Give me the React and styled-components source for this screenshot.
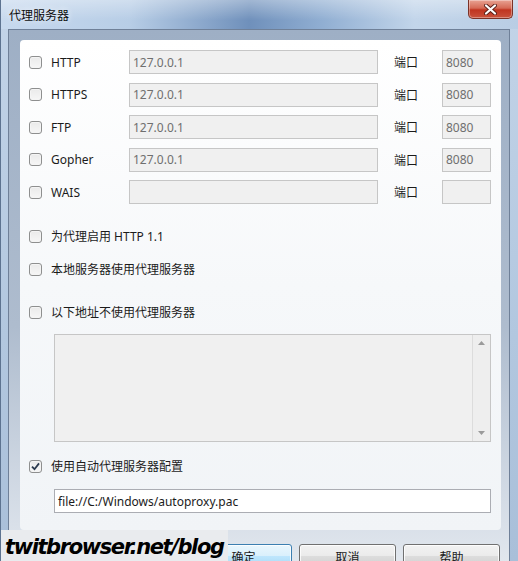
import React from "react";
import styled, { createGlobalStyle } from "styled-components";

const GlobalStyle = createGlobalStyle`
  html, body {
    margin: 0;
    padding: 0;
    overflow: hidden;
  }
  body {
    font-family: "Noto Sans", "Noto Sans CJK SC", sans-serif;
    font-size: 12px;
    color: #1b1b1b;
  }
`;

const Window = styled.div`
  position: relative;
  width: 518px;
  height: 561px;
  overflow: hidden;
  display: flex;
  flex-direction: column;
  background: linear-gradient(180deg, #c3d4e8 0%, #b2c7df 60%, #a9bfd9 100%);
  border-left: 1px solid #5d7390;
  box-sizing: border-box;
`;

const TitleBar = styled.div`
  height: 29px;
  flex: none;
  display: flex;
  align-items: flex-start;
  padding-left: 8px;
  background:
    linear-gradient(180deg, rgba(255, 255, 255, 0.35) 0%, rgba(255, 255, 255, 0) 70%),
    linear-gradient(90deg, #c7d9ee 0%, #b7cde6 25%, #6f90bb 48%, #90aed2 62%, #c2d5ea 80%, #b9cde4 100%);
`;

const Title = styled.span`
  margin-top: 6px;
  font-size: 12px;
  color: #0c0c0c;
  text-shadow: 0 0 6px rgba(255, 255, 255, 0.9);
`;

const CloseButton = styled.div`
  margin-left: auto;
  margin-right: 5px;
  width: 45px;
  height: 19px;
  display: flex;
  align-items: center;
  justify-content: center;
  box-sizing: border-box;
  border: 1px solid #7b3227;
  border-top: none;
  border-radius: 0 0 5px 5px;
  background: linear-gradient(180deg, #e9a393 0%, #d56a55 45%, #c0341f 55%, #c9523c 100%);
  box-shadow: inset 0 0 0 1px rgba(255, 255, 255, 0.35);
`;

const Client = styled.div`
  flex: 1;
  margin: 0 8px 0 7px;
  border: 1px solid #6f8098;
  border-bottom: none;
  padding: 10px 8px 0 11px;
  display: flex;
  flex-direction: column;
  background: linear-gradient(180deg, #9eafc5 0%, #aebcce 55%, #d9e0e9 92%, #e3e8ee 100%);
`;

const Panel = styled.div`
  height: 490px;
  flex: none;
  box-sizing: border-box;
  border-radius: 4px;
  background: linear-gradient(180deg, #ffffff 0%, #f6f8fa 50%, #f1f4f7 100%);
  padding: 10px 10px 0 9px;
  display: flex;
  flex-direction: column;
`;

const ProxyList = styled.div`
  display: flex;
  flex-direction: column;
  gap: 8.5px;
`;

const ProxyRow = styled.div`
  display: flex;
  align-items: center;
  height: 24px;
`;

const Box = styled.span`
  width: 13px;
  height: 13px;
  flex: none;
  box-sizing: border-box;
  border: 1px solid #8e8f8f;
  border-radius: 3px;
  background: linear-gradient(180deg, #eaeaea 0%, #f6f6f6 100%);
  box-shadow: inset 0 0 0 1px #f4f4f4;
  display: flex;
  align-items: center;
  justify-content: center;
`;

const ProtoLabel = styled.span`
  width: 87px;
  padding-left: 9px;
  box-sizing: border-box;
`;

const Field = styled.div`
  width: ${(p) => p.$w}px;
  height: 24px;
  flex: none;
  box-sizing: border-box;
  border: 1px solid ${(p) => (p.$active ? "#abadb3" : "#c6c6c6")};
  background: ${(p) => (p.$active ? "#ffffff" : "#f0f0f0")};
  color: ${(p) => (p.$active ? "#1b1b1b" : "#6f6f6f")};
  padding-left: 3px;
  display: flex;
  align-items: center;
  font-size: 12px;
  white-space: nowrap;
`;

const PortLabel = styled.span`
  width: 64px;
  padding-left: 16px;
  box-sizing: border-box;
`;

const OptionRow = styled.div`
  display: flex;
  align-items: center;
  height: 16px;
  margin-top: ${(p) => p.$top}px;
`;

const OptionText = styled.span`
  padding-left: 9px;
`;

const ListBox = styled.div`
  margin: 14px 0 0 25px;
  height: 108px;
  box-sizing: border-box;
  border: 1px solid #c6c6c6;
  background: #f0f0f0;
  display: flex;
  justify-content: flex-end;
`;

const ScrollTrack = styled.div`
  width: 17px;
  border-left: 1px solid #dcdcdc;
  background: #eeeeee;
  display: flex;
  flex-direction: column;
  justify-content: space-between;
  align-items: center;
  padding: 6px 0;
`;

const PacField = styled(Field)`
  margin: 15px 0 0 25px;
  width: auto;
`;

const Footer = styled.div`
  display: flex;
  justify-content: flex-end;
  gap: 7px;
  padding: 14px 1px 0 0;
`;

const Button = styled.div`
  width: 97px;
  height: 24px;
  box-sizing: border-box;
  border: 1px solid ${(p) => (p.$primary ? "#3c7fb1" : "#707070")};
  border-radius: 3px;
  background: ${(p) =>
    p.$primary
      ? "linear-gradient(180deg, #eaf6fd 0%, #d9f0fc 50%, #bee6fd 51%, #a7d9f5 100%)"
      : "linear-gradient(180deg, #f2f2f2 0%, #ebebeb 50%, #dddddd 51%, #cfcfcf 100%)"};
  box-shadow: inset 0 0 0 1px rgba(255, 255, 255, 0.8);
  display: flex;
  justify-content: center;
  padding-top: 3px;
  font-size: 12px;
`;

const Watermark = styled.div`
  position: absolute;
  left: 0;
  bottom: 0;
  width: 227px;
  height: 31px;
  background: #e9ebee;
  display: flex;
  align-items: flex-end;
  padding-left: 4px;
  box-sizing: border-box;
  font-family: "DejaVu Sans", sans-serif;
  font-weight: bold;
  font-style: italic;
  font-size: 21px;
  letter-spacing: -1.4px;
  line-height: 28px;
  color: #000;
  white-space: nowrap;
`;

function CheckBox({ checked }) {
  return (
    <Box>
      {checked && (
        <svg width="9" height="9" viewBox="0 0 9 9">
          <path d="M1 4.6 L3.5 7.2 L8 1.4" fill="none" stroke="#2b3a4e" strokeWidth="1.8" />
        </svg>
      )}
    </Box>
  );
}

const proxies = [
  { name: "HTTP", host: "127.0.0.1", port: "8080" },
  { name: "HTTPS", host: "127.0.0.1", port: "8080" },
  { name: "FTP", host: "127.0.0.1", port: "8080" },
  { name: "Gopher", host: "127.0.0.1", port: "8080" },
  { name: "WAIS", host: "", port: "" },
];

export default function App() {
  return (
    <>
      <GlobalStyle />
      <Window>
        <TitleBar>
          <Title>代理服务器</Title>
          <CloseButton>
            <svg width="13" height="11" viewBox="0 0 13 11">
              <path d="M2 1.5 L11 9.5 M11 1.5 L2 9.5" stroke="#5a1f18" strokeWidth="4" strokeLinecap="round" />
              <path d="M2 1.5 L11 9.5 M11 1.5 L2 9.5" stroke="#ffffff" strokeWidth="2.2" strokeLinecap="round" />
            </svg>
          </CloseButton>
        </TitleBar>
        <Client>
          <Panel>
            <ProxyList>
              {proxies.map((p) => (
                <ProxyRow key={p.name}>
                  <CheckBox />
                  <ProtoLabel>{p.name}</ProtoLabel>
                  <Field $w={249}>{p.host}</Field>
                  <PortLabel>端口</PortLabel>
                  <Field $w={49}>{p.port}</Field>
                </ProxyRow>
              ))}
            </ProxyList>
            <OptionRow $top={24}>
              <CheckBox />
              <OptionText>为代理启用 HTTP 1.1</OptionText>
            </OptionRow>
            <OptionRow $top={17}>
              <CheckBox />
              <OptionText>本地服务器使用代理服务器</OptionText>
            </OptionRow>
            <OptionRow $top={27}>
              <CheckBox />
              <OptionText>以下地址不使用代理服务器</OptionText>
            </OptionRow>
            <ListBox>
              <ScrollTrack>
                <svg width="7" height="4" viewBox="0 0 7 4">
                  <path d="M0 4 L3.5 0 L7 4 Z" fill="#9a9a9a" />
                </svg>
                <svg width="7" height="4" viewBox="0 0 7 4">
                  <path d="M0 0 L3.5 4 L7 0 Z" fill="#9a9a9a" />
                </svg>
              </ScrollTrack>
            </ListBox>
            <OptionRow $top={16}>
              <CheckBox checked />
              <OptionText>使用自动代理服务器配置</OptionText>
            </OptionRow>
            <PacField $active>file://C:/Windows/autoproxy.pac</PacField>
          </Panel>
          <Footer>
            <Button $primary>确定</Button>
            <Button>取消</Button>
            <Button>帮助</Button>
          </Footer>
        </Client>
        <Watermark>twitbrowser.net/blog</Watermark>
      </Window>
    </>
  );
}
